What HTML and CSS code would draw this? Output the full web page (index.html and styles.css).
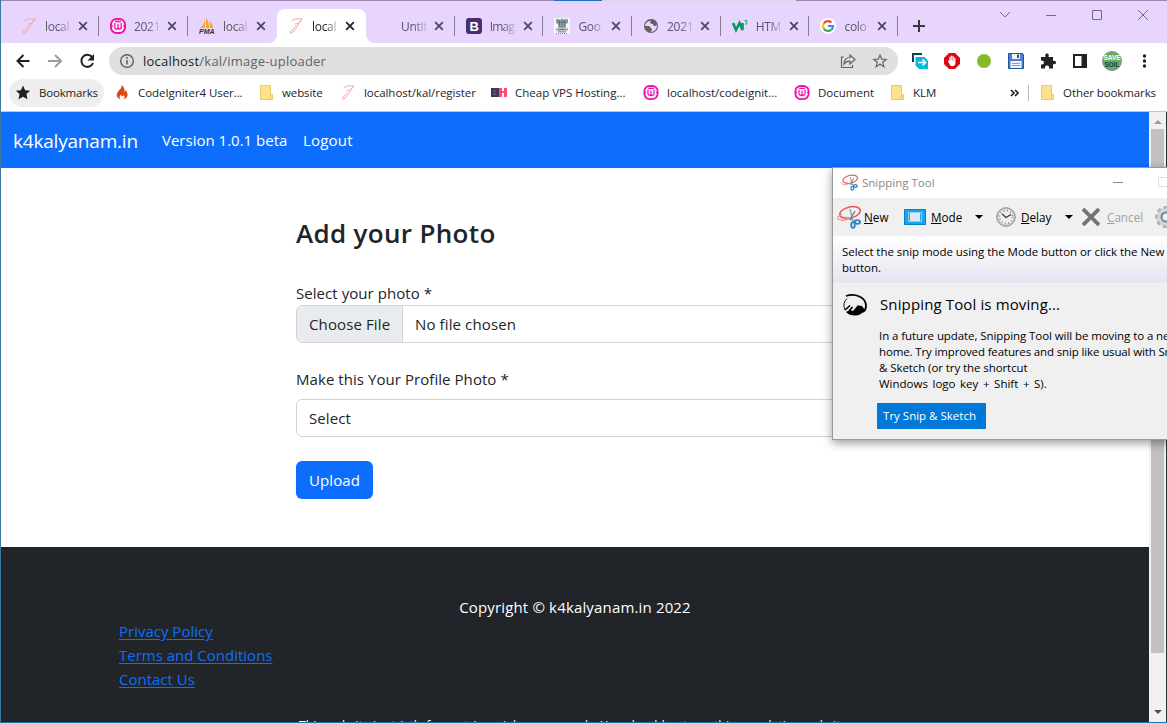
FILE: index.html
```html
<!DOCTYPE html>
<html lang="en">
<head>
<meta charset="utf-8">
<title>Image uploader</title>
<link rel="stylesheet" href="styles.css">
</head>
<body>
<svg class="defs" width="0" height="0">
  <symbol id="feather" viewBox="0 0 16 16"><path d="M3 3.500C4.500 1 10 .5 14 1 13 4 9.500 6.500 6.500 6M14 1C11 4 9.500 9 6 13 4 15.200 1.500 15.700 2 14 2.500 12.500 5.500 11 8 8" fill="none" stroke="#f2a3a6" stroke-width="1"/></symbol>
  <symbol id="wamp" viewBox="0 0 16 16"><rect x="1" y="1" width="14" height="14" rx="5.500" fill="#fff0fb" stroke="#f012a8" stroke-width="2"/><path d="M4.800 5v4q0 2 1.600 2T8 9.500V6v3.500Q8 11 9.600 11t1.600-2V5M5 3.500h6M1 8h1.800M13.200 8H15" fill="none" stroke="#f012a8" stroke-width="1.300"/></symbol>
  <symbol id="close" viewBox="0 0 10 10"><path d="M1.200 1.200l7.600 7.600M8.800 1.200L1.200 8.800" stroke="currentColor" stroke-width="1.800"/></symbol>
  <symbol id="folder" viewBox="0 0 13 15"><path d="M.5.500h10v9h2v5h-12z" fill="#fde28b" stroke="#edca62"/><path d="M10.500 9.500v5" stroke="#edca62"/></symbol>
  <symbol id="scissors" viewBox="0 0 24 24"><ellipse cx="13" cy="7.500" rx="10.500" ry="5.500" transform="rotate(-14 13 7.500)" fill="none" stroke="#e5565a" stroke-width="1.500"/><path d="M5 9Q-1 12 2 14.500q5 2 10-1" fill="none" stroke="#f08a8c" stroke-width="1.200"/><path d="M13 4l3 12M7 12l12 4" stroke="#a1abb1" stroke-width="1.700"/><path d="M18 6l-5 9" stroke="#6d7a82" stroke-width="1.300"/><ellipse cx="16" cy="20" rx="1.800" ry="2.800" fill="none" stroke="#2386c8" stroke-width="1.800"/><ellipse cx="20.500" cy="17" rx="2.500" ry="1.900" fill="none" stroke="#2386c8" stroke-width="1.800"/></symbol>
</svg>
<div class="screen">
  <div class="tabs">
    <i class="strip"></i>
    <div class="tab"><svg class="fav"><use href="#feather"/></svg><span class="name">local</span><svg class="x"><use href="#close"/></svg></div>
    <div class="tab"><svg class="fav"><use href="#wamp"/></svg><span class="name">2021</span><svg class="x"><use href="#close"/></svg></div>
    <div class="tab last"><svg class="fav" viewBox="0 0 16 16"><path d="M1 10Q5 7 6 2v8zM7 10V0q4 5 3 10zM11 10V3q3 3 3 7z" fill="#f7a13c"/><text x="0" y="16" class="pma">PMA</text></svg><span class="name">local</span><svg class="x"><use href="#close"/></svg></div>
    <div class="tab active"><svg class="fav"><use href="#feather"/></svg><span class="name">local</span><svg class="x"><use href="#close"/></svg></div>
    <div class="tab"><svg class="fav"></svg><span class="name">Untit</span><svg class="x"><use href="#close"/></svg></div>
    <div class="tab"><svg class="fav" viewBox="0 0 16 16"><rect width="16" height="16" rx="3" fill="#472f70"/><text x="3.500" y="13" class="boot">B</text></svg><span class="name tight">Imag</span><svg class="x"><use href="#close"/></svg></div>
    <div class="tab"><svg class="fav" viewBox="0 0 16 16"><path fill="#f5f6f6" d="M0 0h16v16H0z"/><path d="M2 1h3l1 1 2-2 2 2 1-1h3v4l-2 1v4H4V6L2 5zM2 10.500h12v2H2zM4 13h8v1.500H4z" fill="#93a0a6"/><path d="M5.500 2v6M8 2v7M10.500 2v6M3 4h10M5 11.500h6" stroke="#52656d" stroke-width=".8"/><path d="M2 15.500h12" stroke="#889" stroke-dasharray="1 1"/></svg><span class="name">Goo</span><svg class="x"><use href="#close"/></svg></div>
    <div class="tab"><svg class="fav" viewBox="0 0 16 16"><circle cx="8" cy="8" r="7" fill="#5f6368"/><path d="M8 2.500L7 5l3 1 1 2 3-1q0 6-6 7l1-3-3-3H2q0-2 2-4l4-1.500z" fill="#ead6ff"/><path d="M9 1l4 2 1 4-3 1-1-2-3-1z" fill="#5f6368"/></svg><span class="name">2021</span><svg class="x"><use href="#close"/></svg></div>
    <div class="tab"><svg class="fav" viewBox="0 0 16 16"><path d="M1 5l3 7 3.500-7 3 7V5" fill="none" stroke="#059862" stroke-width="2.600"/><path d="M12.500 2.500h2.500l-1.300 1.500q1.800 0 1.300 2h-2" fill="none" stroke="#059862" stroke-width=".8"/></svg><span class="name">HTM</span><svg class="x"><use href="#close"/></svg></div>
    <div class="tab"><svg class="fav" viewBox="0 0 16 16"><circle cx="8" cy="8" r="8" fill="#fff"/><g fill="none" stroke-width="2.200"><path d="M11.500 4.500A5 5 0 0 0 3.700 5.500" stroke="#ea4335"/><path d="M3.700 5.500a5 5 0 0 0 0 5" stroke="#fbbc05"/><path d="M3.700 10.500a5 5 0 0 0 7.500 1.300" stroke="#34a853"/><path d="M11.200 11.800A5 5 0 0 0 13 8H8" stroke="#4285f4"/></g></svg><span class="name">colo</span><svg class="x"><use href="#close"/></svg></div>
    <svg class="plus" viewBox="0 0 12 12"><path d="M6 0v12M0 6h12" stroke="#3c3542" stroke-width="2"/></svg>
    <svg class="winctl" viewBox="0 0 150 12"><path d="M0 3l5 5 5-5M46 6.500h10M92.500 1.500h9v9h-9zM138 1l10 10M148 1l-10 10" fill="none" stroke="#746a80"/></svg>
  </div>
  <div class="toolbar">
    <svg class="nav" viewBox="0 0 82 16"><path d="M14.500 8h-12M8.500 2l-6 6 6 6" fill="none" stroke="#202124" stroke-width="2"/><path d="M33 8h13M40 2l6 6-6 6" fill="none" stroke="#9b9b9b" stroke-width="2"/><path d="M77 4A6 6 0 1 0 78 10" fill="none" stroke="#202124" stroke-width="2"/><path d="M79 1v6.500h-6.500z" fill="#202124"/></svg>
    <div class="address"><svg class="info" viewBox="0 0 14 14"><circle cx="7" cy="7" r="6.300" fill="none" stroke="#5f6368" stroke-width="1.400"/><path d="M7 6v4.500M7 3v1.700" stroke="#5f6368" stroke-width="1.600"/></svg><span class="url"><b>localhost</b>/kal/image-uploader</span>
      <svg class="addricons" viewBox="0 0 48 16"><path d="M4 4H1.500v10.500h11V12M4 11q.500-6.500 6-6.500V2l5 4.500-5 4.500V8.200Q6 8 4 11zM40 2l1.700 4.200 4.500.300-3.500 2.800 1.200 4.400-3.900-2.400-3.900 2.400 1.200-4.400-3.500-2.800 4.500-.3z" fill="none" stroke="#5f6368" stroke-width="1.200"/></svg>
    </div>
    <div class="extensions">
      <svg viewBox="0 0 18 18"><path d="M2 10V2h9" fill="none" stroke="#074258" stroke-width="2"/><path d="M4.500 5h9l3.500 3.500V17H8l-3.500-3.500z" fill="#00bcd9"/><path d="M7 10.500h7M11.500 7.500l3 3-3 3" fill="none" stroke="#fff" stroke-width="1.700"/></svg>
      <svg viewBox="0 0 18 18"><path d="M6 1h6l5 5v6l-5 5H6l-5-5V6z" fill="#dc0712"/><path d="M5 9q.3-1.300 1.400-.3V5q.8-1 1.500 0V4q.8-1 1.600 0v.8q.9-1 1.600 0v1.200q1-.6 1.400.3v4.200q0 3.800-3.500 3.800Q6.800 14.300 5 9z" fill="#fff"/><path d="M7.900 5v3.500M9.500 4.800v3.700M11.100 6v3" stroke="#dc0712" stroke-width=".4"/></svg>
      <svg viewBox="0 0 18 18"><circle cx="9" cy="9" r="7" fill="#85bb26"/></svg>
      <svg viewBox="0 0 18 18"><path d="M1.500 1.500h14l1 1v14h-15z" fill="#4d7fcb" stroke="#2853a0"/><path d="M5 2h8v5H5zM3.500 9h11v7h-11z" fill="#edf2fb"/><path d="M10 2.500h2V6h-2z" fill="#37527f"/><path d="M5 11.500h8M5 13.500h8" stroke="#8ca0bd"/></svg>
      <svg viewBox="0 0 18 18"><path d="M2 5h4.500q-1-3.500 1.500-3.500T9.500 5H14v4q3-1 3 1.500T14 12v4.500h-4q.5-3-2-3t-2 3H2v-4q3 .5 3-2t-3-2z" fill="#202124"/></svg>
      <svg viewBox="0 0 18 18"><path d="M2 2h14v14H2zM4 4v10h6.500V4z" fill="#202124" fill-rule="evenodd"/></svg>
      <svg class="avatar" viewBox="0 0 20 20"><circle cx="10" cy="10" r="9.500" fill="#69ad56" stroke="#849690"/><text x="10" y="9" class="save">SAVE</text><text x="10" y="15.500" class="soil">SOIL</text></svg>
      <svg viewBox="0 0 18 18"><g fill="#202124"><circle cx="9.500" cy="4" r="1.700"/><circle cx="9.500" cy="9" r="1.700"/><circle cx="9.500" cy="14" r="1.700"/></g></svg>
    </div>
  </div>
  <div class="bookmarks">
    <div class="bm pill"><svg class="bi" viewBox="0 0 14 14"><path d="M7 .5l2 4.300 4.700.5-3.500 3.200 1 4.800L7 10.900l-4.200 2.400 1-4.800L.3 5.300l4.700-.5z" fill="#202124"/></svg><span>Bookmarks</span></div>
    <div class="bm b1"><svg class="bi" viewBox="0 0 14 16"><path d="M6.500 0q.5 3-2.500 5.500T1.500 12q1 3 4 3.500-2.500-3 .5-5.500 0 2 1.500 2t1-2q2.500 3 0 5.500 4-1 4.500-5 0-3-2.500-5.500.3 2-1 2.500Q10.500 3 6.500 0z" fill="#dd4814"/></svg><span>CodeIgniter4 User...</span></div>
    <div class="bm b2"><svg class="bf"><use href="#folder"/></svg><span>website</span></div>
    <div class="bm b3"><svg class="bi"><use href="#feather"/></svg><span>localhost/kal/register</span></div>
    <div class="bm b4"><svg class="bi" viewBox="0 0 16 12"><path fill="#443657" d="M0 1.500h8v9H0z"/><path fill="#ff4b78" d="M8 1.500h3v3h2v-3h3v9h-3v-4h-2v4H8z"/><path d="M2 4.500h3M2 7.500h3" stroke="#77708a"/></svg><span>Cheap VPS Hosting...</span></div>
    <div class="bm b5"><svg class="bi"><use href="#wamp"/></svg><span>localhost/codeignit...</span></div>
    <div class="bm b6"><svg class="bi"><use href="#wamp"/></svg><span>Document</span></div>
    <div class="bm b7"><svg class="bf"><use href="#folder"/></svg><span>KLM</span></div>
    <svg class="more" viewBox="0 0 10 8"><path d="M1 1l3 3-3 3M5 1l3 3-3 3" fill="none" stroke="#202124" stroke-width="1.700"/></svg>
    <div class="bm other"><svg class="bf"><use href="#folder"/></svg><span>Other bookmarks</span></div>
  </div>
  <div class="viewport">
    <div class="site">
      <nav class="navbar"><a class="brand">k4kalyanam.in</a><a class="version">Version 1.0.1 beta</a><a class="logout">Logout</a></nav>
      <main class="form">
        <h1>Add your Photo</h1>
        <label>Select your photo *</label>
        <div class="file"><span class="choose">Choose File</span><span class="nofile">No file chosen</span></div>
        <label>Make this Your Profile Photo *</label>
        <div class="select">Select</div>
        <button class="upload">Upload</button>
      </main>
      <footer class="footer">
        <p class="copy">Copyright © k4kalyanam.in 2022</p>
        <div class="links"><a>Privacy Policy</a><a>Terms and Conditions</a><a>Contact Us</a></div>
        <p class="notice">This website is strictly for matrimonial purpose only. You should not use this as a dating website.</p>
      </footer>
    </div>
    <div class="scroll"><svg viewBox="0 0 8 5"><path d="M0 5l4-4 4 4z" fill="#9a9a9a"/></svg><i class="thumb"></i><svg viewBox="0 0 8 5"><path d="M0 0l4 4 4-4z" fill="#505050"/></svg></div>
    <div class="edge"></div>
  </div>
</div>
<aside class="snip">
  <div class="stitle"><svg class="sicon"><use href="#scissors"/></svg><span>Snipping Tool</span><svg class="sctl" viewBox="0 0 54 12"><path d="M0 6.500h10" stroke="#888"/><path d="M60 1.500H45.500v9H60" fill="none" stroke="#ddd"/></svg></div>
  <div class="sbar">
    <svg class="snew"><use href="#scissors"/></svg><span class="tnew"><u>N</u>ew</span>
    <svg class="smode" viewBox="0 0 22 16"><path d="M.5.500h21v15H.5z" fill="#18a4ee" stroke="#087fc4"/><path d="M6 4h10v8H6z" fill="#dfe8f0"/><path d="M4.500 3.500h13v9h-13z" fill="none" stroke="#fff" stroke-dasharray="1 1"/></svg><span class="tmode"><u>M</u>ode</span>
    <svg class="caret" viewBox="0 0 8 4"><path d="M0 0h8L4 4z"/></svg>
    <svg class="sdelay" viewBox="0 0 20 20"><circle cx="10" cy="10" r="9.300" fill="#c9c9c9" stroke="#8d8d8d"/><circle cx="10" cy="10" r="7.500" fill="#eee"/><circle cx="10" cy="10" r="6.500" fill="none" stroke="#777" stroke-width="1.500" stroke-dasharray="1 2.400"/><path d="M6 7l4 3.500 5-3" fill="none" stroke="#333" stroke-width="1.200"/></svg><span class="tdelay"><u>D</u>elay</span>
    <svg class="caret" viewBox="0 0 8 4"><path d="M0 0h8L4 4z"/></svg>
    <svg class="scancel" viewBox="0 0 18 18"><path d="M1 1l16 16M17 1L1 17" stroke="#747474" stroke-width="3.800"/></svg><span class="tcancel"><u>C</u>ancel</span>
    <svg class="gear" viewBox="0 0 24 24"><circle cx="12" cy="12" r="9.500" fill="#ccd5d9" stroke="#aab5bb" stroke-width="3" stroke-dasharray="4 3"/><circle cx="12" cy="12" r="8.500" fill="#cfd8dc"/><circle cx="12" cy="12" r="4.500" fill="#edf1f3" stroke="#78848c" stroke-width="2"/></svg>
  </div>
  <div class="stip"><span>Select the snip mode using the Mode button or click the New</span><span>button.</span></div>
  <div class="sbody">
    <svg class="logo" viewBox="0 0 24 22"><path d="M3 2C12-1 23 3 23 12q0 4-3 6" fill="none" stroke="#000" stroke-width="1.800"/><path d="M4 4.500Q-1 9 2 16" fill="none" stroke="#000" stroke-width=".9"/><path d="M3 18l4-2 3 1 5-6 2 1 1.500-.5L22 16q-4 5.500-10 5.500T3 18z"/><path d="M2 16l5-4.500M6 17l3.500-4" stroke="#000" stroke-width="1.600"/></svg>
    <div class="stext"><h2>Snipping Tool is moving...</h2>
      <div class="para"><span>In a future update, Snipping Tool will be moving to a new</span><span class="improved">home. Try improved features and snip like usual with Snip</span><span>&amp; Sketch (or try the shortcut</span><span class="keys">Windows logo key + Shift + S).</span></div>
      <button class="try">Try Snip &amp; Sketch</button>
    </div>
  </div>
</aside>
</body>
</html>
```
FILE: styles.css
```css
* { box-sizing: border-box; }
body { margin: 0; font-family: "Open Sans", "Noto Sans", sans-serif; font-size: 15px; color: #212529; width: 1167px; height: 723px; overflow: hidden; position: relative; }
svg { flex: none; }
h1, h2, p { margin: 0; font-weight: 400; }
span, a, label { white-space: nowrap; }
.defs { position: absolute; }
.screen { height: 723px; display: flex; flex-direction: column; border-left: 1px solid #3a7a9e; border-bottom: 1px solid #1878a8; }
.tabs { height: 43px; flex: none; background: #e8d5fe; border-top: 1px solid #9b85ae; display: flex; align-items: flex-start; padding: 8px 22px 0 9px; position: relative; }
.strip { position: absolute; left: 553px; top: -1px; width: 242px; height: 1px; background: linear-gradient(to right, #1e6fc0 48px, #dcd5e6 48px); }
.tab { width: 89px; flex: none; height: 34px; padding: 0 9px 0 11px; display: flex; align-items: center; color: #5e5368; font-size: 12px; position: relative; }
.tab:nth-child(n+6) { width: 88.7px; }
.tab:not(.active):not(.last)::after { content: ""; position: absolute; right: 0; top: 7px; height: 20px; width: 1px; background: #897a98; }
.fav { width: 16px; height: 16px; margin-right: 8px; }
.name { width: 26px; letter-spacing: -.3px; -webkit-mask-image: linear-gradient(to right, #000 50%, rgba(0,0,0,.15)); mask-image: linear-gradient(to right, #000 50%, rgba(0,0,0,.15)); }
.tight { letter-spacing: -.8px; }
.x { width: 10px; height: 10px; margin-left: 7px; color: #51465a; }
.active { background: #fff; border-radius: 8px 8px 0 0; color: #222; }
.active .x { color: #222; }
.active::before { content: ""; position: absolute; left: -8px; right: -8px; bottom: 0; height: 8px; background: radial-gradient(circle at 0 0, transparent 7.5px, #fff 8px) left / 8px 8px no-repeat, radial-gradient(circle at 100% 0, transparent 7.5px, #fff 8px) right / 8px 8px no-repeat; }
.pma { font: italic bold 7px "Liberation Sans", sans-serif; fill: #333; }
.boot { font: bold 13px "Liberation Sans", sans-serif; fill: #fff; }
.plus { width: 12px; height: 12px; margin: 11px 0 0 15px; }
.winctl { width: 150px; height: 12px; margin-left: auto; margin-right: -5px; }
.toolbar { height: 36px; flex: none; background: #fff; display: flex; align-items: center; padding-left: 14px; }
.nav { width: 82px; height: 16px; }
.address { width: 789px; height: 28px; margin-left: 12px; flex: none; border-radius: 14px; background: #dfdfdf; display: flex; align-items: center; padding: 0 10px 0 11px; }
.info { width: 14px; height: 14px; margin-right: 9px; }
.url { font-size: 13px; letter-spacing: .21px; color: #5f6368; }
.url b { font-weight: 400; color: #202124; }
.addricons { width: 48px; height: 16px; margin-left: auto; }
.extensions { display: flex; align-items: center; gap: 14px; margin-left: 13px; }
.extensions svg { width: 18px; height: 18px; }
.extensions svg.avatar { width: 20px; height: 20px; margin: 0 -1px; }
.save, .soil { font: bold 6.500px "Liberation Sans", sans-serif; fill: #fff; text-anchor: middle; }
.soil { fill: #173b6d; }
.bookmarks { height: 33px; flex: none; background: #fff; border-bottom: 1px solid #b5cce0; display: flex; align-items: center; padding: 0 11px 5px 8px; font-size: 11.500px; }
.bm { display: flex; align-items: center; height: 28px; flex: none; }
.bi { width: 16px; height: 15px; margin-right: 8px; }
.bf { width: 13px; height: 15px; margin-right: 9px; }
.pill { width: 95px; background: #eee; border-radius: 14px; padding-left: 6px; letter-spacing: -.2px; }
.b1 { margin-left: 10px; width: 146px; letter-spacing: -.07px; }
.b2 { width: 80px; letter-spacing: -.1px; }
.b3 { width: 151px; letter-spacing: -.05px; }
.b4 { width: 152px; }
.b5 { width: 151px; letter-spacing: -.02px; }
.b6 { width: 97px; }
.b7 { width: 60px; }
.more { width: 10px; height: 8px; margin-left: auto; margin-right: 8px; }
.other { border-left: 1px solid #bbb; height: 16px; padding-left: 12px; letter-spacing: -.1px; }
.viewport { flex: 1; min-height: 0; display: flex; }
.site { width: 1148px; height: 610px; overflow: hidden; display: flex; flex-direction: column; background: #fff; }
.navbar { height: 56px; flex: none; background: #0d6efd; color: #fff; display: flex; align-items: center; padding: 0 12px; }
.brand { font-size: 19px; width: 149px; letter-spacing: -.2px; padding-top: 1px; }
.version { width: 141px; }
.logout { letter-spacing: .2px; }
.form { height: 379px; flex: none; margin-left: 295px; width: 558px; padding-top: 46px; display: flex; flex-direction: column; }
h1 { font-size: 26px; line-height: 38px; font-weight: 600; letter-spacing: .32px; height: 67px; }
.form label { line-height: 24px; height: 24px; letter-spacing: .06px; }
.file { height: 38px; border: 1px solid #ced4da; border-radius: 6px; display: flex; align-items: center; margin: 0 0 24px; overflow: hidden; letter-spacing: .12px; }
.choose { background: #e9ecef; width: 106px; border-right: 1px solid #ced4da; padding: 0 12px; line-height: 38px; }
.nofile { padding-left: 12px; }
.select { height: 38px; border: 1px solid #ced4da; border-radius: 6px; margin: 8px 0 24px; padding: 0 12px; line-height: 37px; letter-spacing: .1px; }
.upload { width: 77px; height: 38px; background: #0d6efd; border: 0; border-radius: 6px; color: #fff; font: inherit; padding: 0; letter-spacing: .1px; }
.footer { flex: 1; min-height: 0; background: #212529; color: #fff; padding-top: 48px; }
.copy { text-align: center; line-height: 24px; letter-spacing: .16px; }
.links { display: flex; flex-direction: column; align-items: flex-start; margin-left: 118px; line-height: 24px; color: #0d6efd; }
.links a { text-decoration: underline; text-underline-offset: 2px; }
.notice { font-size: 12.300px; line-height: 20px; margin-top: 25px; padding-left: 298px; white-space: nowrap; }
.scroll { width: 17px; background: #f1f1f1; display: flex; flex-direction: column; align-items: center; padding: 7px 0; }
.scroll svg { width: 8px; height: 5px; }
.thumb { width: 13px; height: 524px; background: #c1c1c1; margin: 5px 0 auto; }
.edge { width: 1px; background: #24323a; }
.snip { position: absolute; left: 832px; top: 167px; width: 345px; height: 273px; background: #f0f0f0; border: 1px solid #999; box-shadow: 0 3px 9px rgba(0,0,0,.4); color: #000; font-size: 11.500px; }
.stitle { height: 30px; background: #fff; color: #888; display: flex; align-items: center; padding: 0 0 2px 8px; }
.sicon { width: 17px; height: 17px; margin-right: 4px; }
.sctl { width: 54px; height: 12px; margin-left: 178px; }
.sbar { height: 38px; display: flex; align-items: center; padding-left: 4px; }
.sbar span { flex: none; font-size: 11.700px; margin-top: -1px; }
.snew { width: 24px; height: 24px; }
.tnew { width: 41px; padding-left: 3px; }
.smode { width: 22px; height: 16px; margin-left: 2px; }
.tmode { width: 49px; padding-left: 5px; }
.caret { width: 8px; height: 4px; }
.sdelay { width: 20px; height: 20px; margin-left: 13px; }
.tdelay { width: 49px; padding-left: 5px; }
.scancel { width: 18px; height: 18px; margin-left: 9px; }
.tcancel { width: 53px; padding-left: 7px; color: #a0a0a0; }
.gear { width: 24px; height: 24px; margin-left: 1px; }
.stip { height: 47px; padding: 8px 9px; background: linear-gradient(#fff, #e4e5f0); line-height: 16px; display: flex; flex-direction: column; align-items: flex-start; letter-spacing: -.05px; }
.sbody { display: flex; padding: 11px 0 0 10px; }
.logo { width: 24px; height: 22px; }
.stext { margin-left: 12px; }
h2 { font-size: 15px; line-height: 21px; margin-bottom: 13px; letter-spacing: .13px; padding-left: 1px; }
.para { display: flex; flex-direction: column; align-items: flex-start; line-height: 16px; letter-spacing: -.08px; }
.improved { letter-spacing: -.14px; }
.keys { word-spacing: 1.600px; letter-spacing: 0; }
.try { width: 109px; height: 26px; background: #0078d7; color: #fff; border: 0; font: inherit; padding: 0 0 1px; margin: 11px 0 0 -2px; text-indent: -4px; }
```
